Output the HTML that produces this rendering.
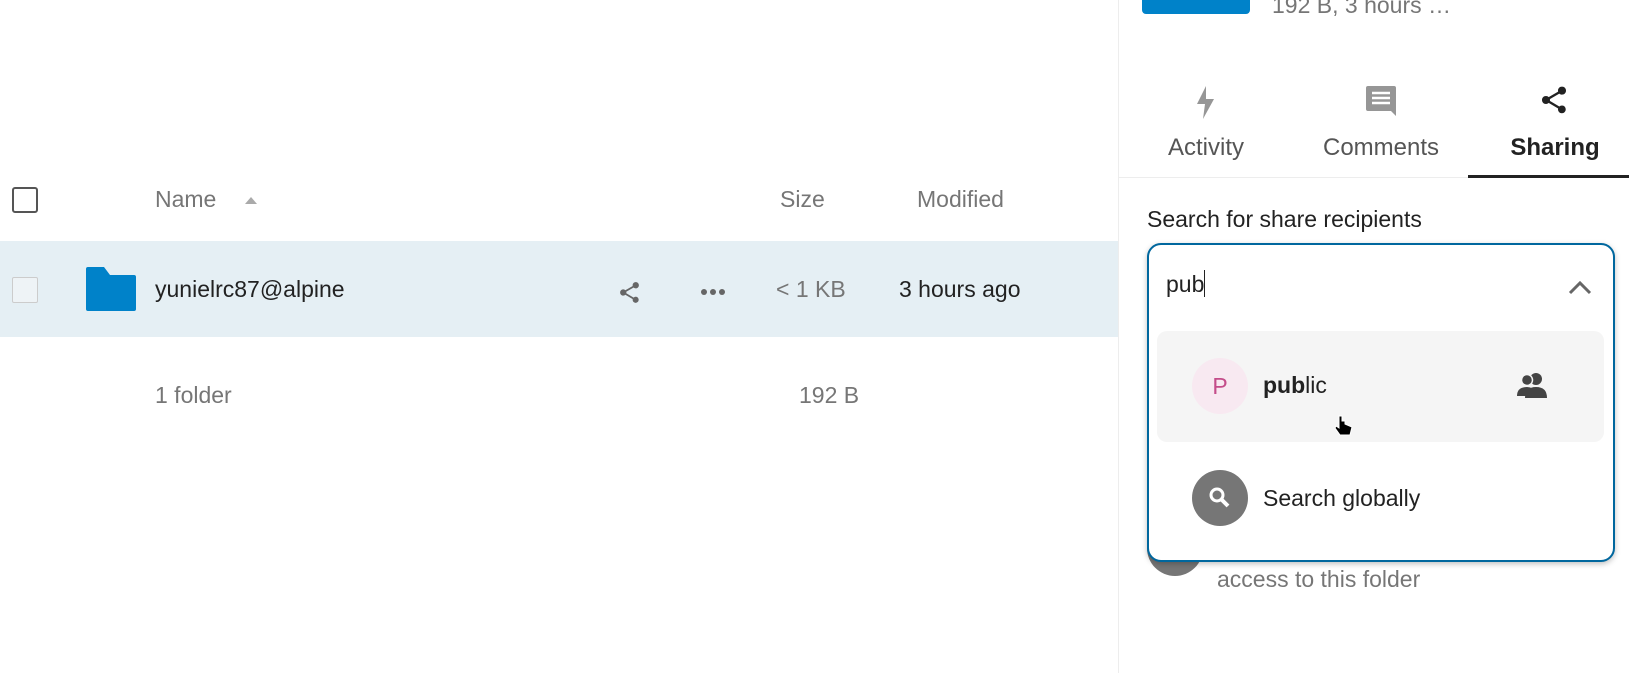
<!DOCTYPE html>
<html><head><meta charset="utf-8"><style>
*{margin:0;padding:0;box-sizing:border-box}
body{width:1629px;height:673px;overflow:hidden;background:#fff;font-family:"Liberation Sans",sans-serif;position:relative;color:#222}
.a{position:absolute;white-space:nowrap}
.g{color:#767676}
</style></head><body>
<!-- left list -->
<div class="a" style="left:12px;top:187px;width:26px;height:26px;border:2px solid #555;border-radius:3px"></div>
<div class="a g" style="left:155px;top:186px;font-size:23px">Name</div>
<svg class="a" style="left:244px;top:195px" width="14" height="10"><path d="M1 9L7 2L13 9Z" fill="#aaa"/></svg>
<div class="a g" style="left:780px;top:186px;font-size:23px">Size</div>
<div class="a g" style="left:917px;top:186px;font-size:23px">Modified</div>
<div class="a" style="left:0;top:241px;width:1118px;height:96px;background:#e5eff4"></div>
<div class="a" style="left:12px;top:277px;width:26px;height:26px;border:1px solid #ccc;border-radius:2px;background:#eef3f6"></div>
<svg class="a" style="left:86px;top:267px" width="50" height="44"><path d="M0 2Q0 0 2 0H18L24 8H48Q50 8 50 10V42Q50 44 48 44H2Q0 44 0 42Z" fill="#0082c9"/></svg>
<div class="a" style="left:155px;top:276px;font-size:23px;color:#222">yunielrc87@alpine</div>
<svg class="a" style="left:617px;top:280px" width="25" height="25" viewBox="0 0 24 24"><path d="M18 16.1c-.8 0-1.5.3-2 .8L8.9 12.7c.1-.2.1-.5.1-.7s0-.5-.1-.7L16 7.2c.5.5 1.2.8 2 .8 1.7 0 3-1.3 3-3s-1.3-3-3-3-3 1.3-3 3c0 .2 0 .5.1.7L8 9.8C7.5 9.3 6.8 9 6 9c-1.7 0-3 1.3-3 3s1.3 3 3 3c.8 0 1.5-.3 2-.8l7.1 4.2c-.1.2-.1.4-.1.6 0 1.6 1.3 2.9 2.9 2.9s2.9-1.3 2.9-2.9-1.2-2.9-2.8-2.9z" fill="#666"/></svg>
<svg class="a" style="left:700px;top:288px" width="26" height="8"><circle cx="4" cy="4" r="3" fill="#666"/><circle cx="13" cy="4" r="3" fill="#666"/><circle cx="22" cy="4" r="3" fill="#666"/></svg>
<div class="a g" style="left:776px;top:276px;font-size:23px">&lt; 1 KB</div>
<div class="a" style="left:899px;top:276px;font-size:23px;color:#222">3 hours ago</div>
<div class="a g" style="left:155px;top:382px;font-size:23px">1 folder</div>
<div class="a g" style="left:799px;top:382px;font-size:23px">192 B</div>
<!-- right panel -->
<div class="a" style="left:1118px;top:0;width:1px;height:673px;background:#ededed"></div>
<div class="a" style="left:1142px;top:0;width:108px;height:14px;background:#0082c9;border-radius:0 0 4px 4px"></div>
<div class="a g" style="left:1272px;top:-8px;font-size:23px">192 B, 3 hours …</div>
<svg class="a" style="left:1192px;top:86px" width="28" height="34" viewBox="0 0 28 34"><path d="M14 0L5 18H13L11 33L22 13H14Z" fill="#969696"/></svg>
<svg class="a" style="left:1366px;top:86px" width="30" height="32" viewBox="0 0 30 32"><path d="M2 0H28Q30 0 30 2V30L25 25H2Q0 25 0 23V2Q0 0 2 0Z" fill="#969696"/><path d="M6 7H24M6 12H24M6 17H24" stroke="#fff" stroke-width="2.5"/></svg>
<svg class="a" style="left:1538px;top:84px" width="32" height="32" viewBox="0 0 24 24"><path d="M18 16.1c-.8 0-1.5.3-2 .8L8.9 12.7c.1-.2.1-.5.1-.7s0-.5-.1-.7L16 7.2c.5.5 1.2.8 2 .8 1.7 0 3-1.3 3-3s-1.3-3-3-3-3 1.3-3 3c0 .2 0 .5.1.7L8 9.8C7.5 9.3 6.8 9 6 9c-1.7 0-3 1.3-3 3s1.3 3 3 3c.8 0 1.5-.3 2-.8l7.1 4.2c-.1.2-.1.4-.1.6 0 1.6 1.3 2.9 2.9 2.9s2.9-1.3 2.9-2.9-1.2-2.9-2.8-2.9z" fill="#222"/></svg>
<div class="a" style="left:1136px;top:134px;width:140px;text-align:center;font-size:24px;color:#555">Activity</div>
<div class="a" style="left:1301px;top:134px;width:160px;text-align:center;font-size:24px;color:#555">Comments</div>
<div class="a" style="left:1480px;top:134px;width:150px;text-align:center;font-size:24px;font-weight:bold;color:#222">Sharing</div>
<div class="a" style="left:1119px;top:177px;width:510px;height:1px;background:#ededed"></div>
<div class="a" style="left:1468px;top:175px;width:161px;height:3px;background:#222"></div>
<div class="a" style="left:1147px;top:206px;font-size:23px;color:#222">Search for share recipients</div>
<!-- below box -->
<div class="a" style="left:1147px;top:520px;width:56px;height:56px;border-radius:50%;background:#767676"></div>
<div class="a g" style="left:1217px;top:566px;font-size:23px">access to this folder</div>
<!-- box -->
<div class="a" style="left:1147px;top:243px;width:468px;height:319px;border:2px solid #00679e;border-radius:14px;background:#fff;box-shadow:0 2px 6px rgba(0,0,0,.25)"></div>
<div class="a" style="left:1166px;top:270px;font-size:23px;color:#222">pub<span style="display:inline-block;width:1px;height:27px;background:#222;vertical-align:-5px"></span></div>
<svg class="a" style="left:1568px;top:279px" width="24" height="16"><path d="M2 14L12 4L22 14" stroke="#666" stroke-width="3" fill="none"/></svg>
<div class="a" style="left:1157px;top:331px;width:447px;height:111px;background:#f5f5f5;border-radius:10px"></div>
<div class="a" style="left:1192px;top:358px;width:56px;height:56px;border-radius:50%;background:#f8e9f1;color:#c44d8a;font-size:23px;text-align:center;line-height:56px">P</div>
<div class="a" style="left:1263px;top:372px;font-size:23px;color:#222"><b>pub</b>lic</div>
<svg class="a" style="left:1517px;top:372px" width="30" height="26" viewBox="0 0 30 26"><circle cx="19" cy="7" r="6" fill="#444"/><path d="M8 26Q8 15 19 15Q30 15 30 26Z" fill="#444"/><circle cx="10" cy="8" r="5.5" fill="#444" stroke="#f5f5f5" stroke-width="1.5"/><path d="M0 24Q0 15 10 15Q16 15 18 20V24Z" fill="#444"/></svg>
<svg class="a" style="left:1335px;top:415px" width="18" height="22" viewBox="0 0 18 22"><path d="M4 1V13L1 11L0 13L5 20H15L17 12L10 9V6H7V1Z" fill="#000" stroke="#fff" stroke-width="1"/></svg>
<div class="a" style="left:1192px;top:470px;width:56px;height:56px;border-radius:50%;background:#767676"></div>
<svg class="a" style="left:1204px;top:482px" width="32" height="32" viewBox="0 0 32 32"><circle cx="13" cy="13" r="6" stroke="#fff" stroke-width="3" fill="none"/><path d="M17 17L24 24" stroke="#fff" stroke-width="4"/></svg>
<div class="a" style="left:1263px;top:485px;font-size:23px;color:#222">Search globally</div>
</body></html>
